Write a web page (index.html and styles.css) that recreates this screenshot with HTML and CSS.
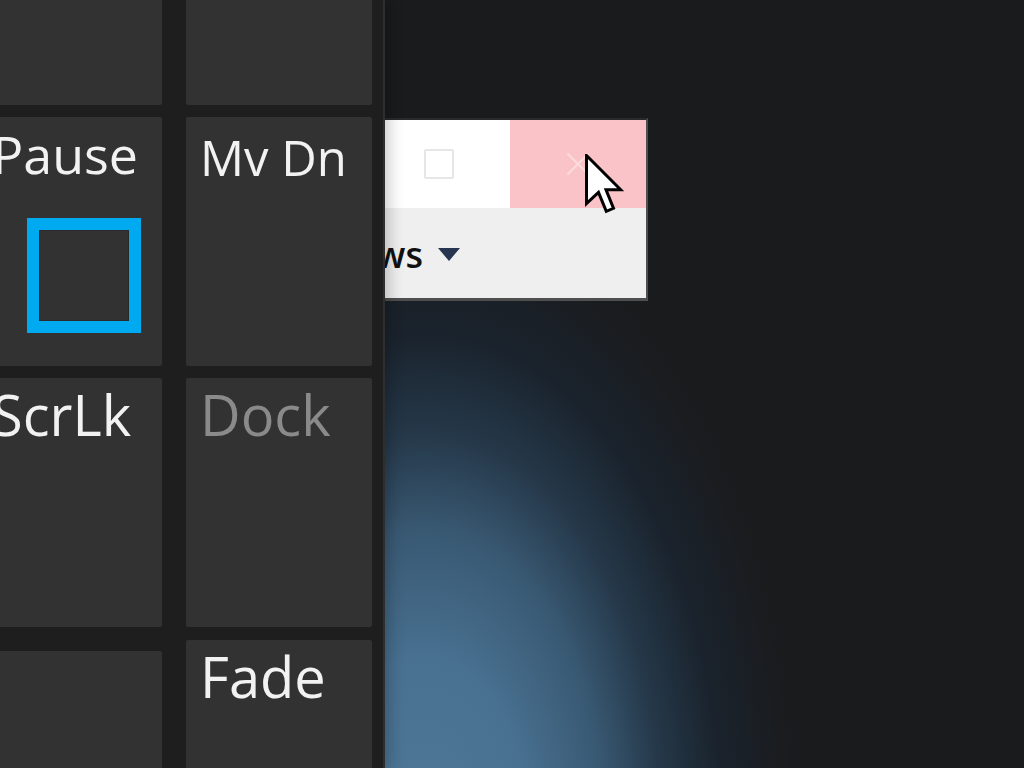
FILE: index.html
```html
<!DOCTYPE html>
<html lang="en">
<head>
<meta charset="utf-8">
<title>On-Screen Keyboard</title>
<link rel="stylesheet" href="styles.css">
</head>
<body>
<div class="screen">
  <aside class="osk">
    <div class="keys">
      <div class="col col-left">
        <div class="key"></div>
        <div class="key">
          <span class="label label-md">Pause</span>
          <span class="indicator"></span>
        </div>
        <div class="key"><span class="label">ScrLk</span></div>
        <div class="key key-last-left"></div>
      </div>
      <div class="col col-right">
        <div class="key"></div>
        <div class="key"><span class="label label-sm">Mv Dn</span></div>
        <div class="key"><span class="label label-dim">Dock</span></div>
        <div class="key key-last-right"><span class="label">Fade</span></div>
      </div>
    </div>
  </aside>
  <main class="desktop">
    <div class="window">
      <div class="titlebar">
        <div class="tb-btn tb-max"><span class="max-square"></span></div>
        <div class="tb-btn tb-close">
          <svg class="close-x" viewBox="0 0 24 24" width="28" height="28">
            <path d="M3 3 L21 21 M21 3 L3 21" />
          </svg>
        </div>
      </div>
      <div class="win-body">
        <div class="menu-label"><span class="menu-text">Windows</span></div>
        <svg class="menu-caret" viewBox="0 0 22 13" width="22" height="13">
          <path d="M0 0 H22 L11 13 Z" />
        </svg>
      </div>
    </div>
    <svg class="cursor" viewBox="-0.5 -0.5 13 21" width="39" height="63">
      <path d="M0 0 L0 16 L4 12.3 L6.6 18.6 L9 17.6 L6.5 11.4 L11.4 11.4 Z" />
    </svg>
  </main>
</div>
</body>
</html>
```

FILE: styles.css
```css
html, body {
  margin: 0;
  padding: 0;
  background: #1a1b1d;
  overflow: hidden;
}

.screen {
  display: flex;
  width: 1024px;
  height: 768px;
  overflow: hidden;
}

/* On-screen keyboard panel */
.osk {
  flex: none;
  width: 383px;
  height: 768px;
  background: #1e1e1e;
  border-right: 2px solid #2e2e2e;
  overflow: hidden;
  position: relative;
  z-index: 2;
  box-shadow: 4px 0 14px rgba(0, 0, 0, 0.22);
}

.keys {
  display: flex;
  gap: 24px;
  margin-left: -17px;
  margin-top: -144px;
}

.col {
  display: flex;
  flex-direction: column;
  gap: 12px;
  flex: none;
}

.col-left { width: 179px; }
.col-right { width: 186px; }

.key {
  height: 249px;
  box-sizing: border-box;
  padding: 8px 14px 0;
  background: #323232;
  border-radius: 2px;
  font-family: "Open Sans", "Noto Sans", sans-serif;
  font-size: 56px;
  line-height: 1;
  color: #f2f2f2;
  display: flex;
  flex-direction: column;
  align-items: flex-start;
}

.col-left .key {
  padding-left: 9px;
}

.key-last-left { margin-top: 12px; }
.key-last-right { margin-top: 1px; }

.label {
  display: block;
  white-space: nowrap;
}

.label-md {
  font-size: 52px;
  padding-top: 3px;
}

.label-sm {
  font-size: 49px;
  padding-top: 8px;
}

.label-dim {
  color: #8a8a8a;
}

.indicator {
  display: block;
  width: 114px;
  height: 115px;
  box-sizing: border-box;
  margin-top: 38px;
  margin-left: 35px;
  border: 12px solid #00aaf0;
  box-shadow: inset 0 0 0 1px #2a2a2a;
}

/* Desktop */
.desktop {
  flex: 1;
  position: relative;
  overflow: hidden;
  background:
    radial-gradient(ellipse 370px 620px at 40px 830px,
      #4f7797 0%, #487090 28%, #395973 48%, #253849 64%, #1a232d 80%, rgba(26, 27, 29, 0) 100%),
    #1a1b1d;
}

.window {
  position: absolute;
  left: -14px;
  top: 118px;
  width: 277px;
  height: 183px;
  box-sizing: border-box;
  border-top: 2px solid #2a2a2a;
  border-right: 2px solid #4f4f4f;
  border-bottom: 3px solid #4f4f4f;
  display: flex;
  flex-direction: column;
}

.titlebar {
  display: flex;
  height: 88px;
  background: #ffffff;
}

.tb-btn {
  display: flex;
  align-items: center;
  justify-content: center;
}

.tb-max {
  width: 139px;
  flex: none;
}

.max-square {
  width: 30px;
  height: 30px;
  box-sizing: border-box;
  border: 2px solid #e6e6e6;
  border-radius: 2px;
  margin-right: 4px;
}

.tb-close {
  flex: 1;
  background: #f9c3c7;
}

.close-x path {
  stroke: #fddadc;
  stroke-width: 2;
  fill: none;
}

.win-body {
  flex: 1;
  background: #efefef;
  display: flex;
  align-items: center;
  gap: 15px;
  padding-top: 2px;
}

.menu-label {
  width: 52px;
  flex: none;
  display: flex;
  justify-content: flex-end;
}

.menu-text {
  flex: none;
  white-space: nowrap;
  font-family: "Open Sans", "Noto Sans", sans-serif;
  font-size: 36px;
  font-weight: 600;
  color: #111111;
}

.menu-caret path {
  fill: #283550;
}

.cursor {
  position: absolute;
  left: 200px;
  top: 154px;
}

.cursor path {
  fill: #ffffff;
  stroke: #000000;
  stroke-width: 1;
  stroke-linejoin: miter;
}
```
